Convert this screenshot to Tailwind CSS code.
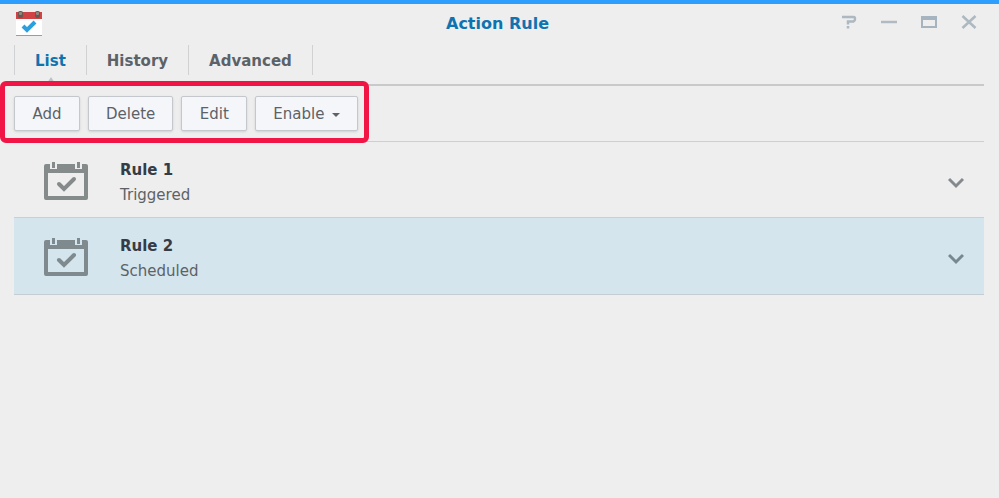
<!DOCTYPE html>
<html lang="en">
<head>
    <meta charset="UTF-8">
    <meta name="viewport" content="width=device-width, initial-scale=1.0">
    <title>Action Rule</title>

    <!-- Tailwind CSS -->
    <script src="https://cdn.jsdelivr.net/npm/@tailwindcss/browser@4"></script>
</head>
<body class="min-h-screen border-t-4 border-[#2e9efe] bg-[#eeeeee] font-['Verdana','DejaVu_Sans',sans-serif] text-[15px] leading-5 text-[#5c6268]">
    <!-- Title bar -->
    <header class="grid h-10 grid-cols-3 items-center pl-4 pr-5">
        <svg class="h-[26px] w-[26px]" viewBox="0 0 26 26">
            <rect x="0" y="6" width="26" height="19" fill="#fff"/>
            <rect x="0" y="24" width="26" height="1" fill="#9c9c9c"/>
            <rect x="0" y="1" width="26" height="7" fill="#cf4347"/>
            <rect x="2" y="0" width="5" height="7" rx="2" fill="#6b5550"/>
            <rect x="19" y="0" width="5" height="7" rx="2" fill="#6b5550"/>
            <rect x="3" y="1" width="3" height="3" rx="1" fill="#8f8a80"/>
            <rect x="20" y="1" width="3" height="3" rx="1" fill="#8f8a80"/>
            <path d="M7 15l4 4 8-8" fill="none" stroke="#2d9fdf" stroke-width="4"/>
        </svg>
        <h1 class="text-center text-base font-bold text-[#0f73b0]">Action Rule</h1>
        <div class="flex justify-end gap-5 pb-1">
            <button type="button" aria-label="Help" class="flex w-5 justify-center">
                <svg class="h-4 w-4" viewBox="0 0 16 16" fill="none" stroke="#adb8c1" stroke-width="2.500"><path d="M1 3h11.500q1.500 0 1.500 2t-1.500 2.500H7v3M7 12v2.500"/></svg>
            </button>
            <button type="button" aria-label="Minimize" class="flex w-5 justify-center">
                <svg class="h-4 w-4" viewBox="0 0 16 16" fill="none" stroke="#b0bac2" stroke-width="2.500"><path d="M0 8h16"/></svg>
            </button>
            <button type="button" aria-label="Maximize" class="flex w-5 justify-center">
                <svg class="h-4 w-4" viewBox="0 0 16 16" fill="none" stroke="#a6b4bf" stroke-width="2"><path d="M1 3h14v10H1zM1 5h14"/></svg>
            </button>
            <button type="button" aria-label="Close" class="flex w-5 justify-center">
                <svg class="h-4 w-4" viewBox="0 0 16 16" fill="none" stroke="#adb8c1" stroke-width="2.500"><path d="M1.500 2l13 12M14.500 2l-13 12"/></svg>
            </button>
        </div>
    </header>

    <!-- Tabs -->
    <nav class="ml-[14px] mr-[15px] flex h-[42px] border-b-2 border-[#c8c9ca] font-bold">
        <a href="#list" class="relative mt-px h-[30px] border-l border-[#cfd1d3] px-5 pt-1.5 text-[#0f73b0]">List
            <svg class="absolute left-8 top-8 h-[6px] w-2" viewBox="0 0 8 6" fill="#bfc2c4"><path d="M4 0l4 6H0z"/></svg>
        </a>
        <a href="#history" class="mt-px h-[30px] border-l border-[#cfd1d3] px-5 pt-1.5">History</a>
        <a href="#advanced" class="mt-px h-[30px] border-x border-[#cfd1d3] px-5 pt-1.5">Advanced</a>
    </nav>

    <!-- Toolbar -->
    <div class="relative ml-[14px] mr-[15px] flex gap-2 border-b border-[#cccfd1] py-[10px]">
        <button type="button" class="h-[35px] min-w-[66px] rounded-xs border border-[#c4c8cc] bg-[#f5f6fa] px-[17px] shadow-sm">Add</button>
        <button type="button" class="h-[35px] min-w-[66px] rounded-xs border border-[#c4c8cc] bg-[#f5f6fa] px-[17px] shadow-sm">Delete</button>
        <button type="button" class="h-[35px] min-w-[66px] rounded-xs border border-[#c4c8cc] bg-[#f5f6fa] px-[17px] shadow-sm">Edit</button>
        <button type="button" class="flex h-[35px] items-center gap-2 rounded-xs border border-[#c4c8cc] bg-[#f5f6fa] px-[17px] shadow-sm">Enable
            <svg class="mt-0.5 h-1 w-2" viewBox="0 0 8 4" fill="#5c6268"><path d="M0 0h8L4 4z"/></svg>
        </button>
        <div class="pointer-events-none absolute -left-[14px] -top-[5px] h-[62px] w-[369px] rounded-md border-[5px] border-[#f01545]"></div>
    </div>

    <!-- Rules -->
    <ul class="ml-[14px] mr-[15px]">
        <li class="flex h-[76px] items-center border-b border-[#cccfd1] pl-[30px] pr-5">
            <svg class="mr-8 h-10 w-11" viewBox="0 0 44 40" fill="#858a8b">
                <path fill-rule="evenodd" d="M2 4h4v5h7V4h18v5h7V4h4q2 0 2 2v32q0 2-2 2H2q-2 0-2-2V6q0-2 2-2zM4 13v23h36V13z"/>
                <path d="M8 2h3v6H8zM33 2h3v6h-3z"/>
                <path d="M15 24l5 5 10-10" fill="none" stroke="#858a8b" stroke-width="4" stroke-linecap="round"/>
            </svg>
            <div class="grow pt-1.5">
                <h2 class="font-bold leading-[25px] text-[#343d47]">Rule 1</h2>
                <p class="leading-[25px]">Triggered</p>
            </div>
            <button type="button" aria-label="Expand Rule 1" class="pt-1">
                <svg class="h-4 w-4" viewBox="0 0 16 16" fill="none" stroke="#84898e" stroke-width="3"><path d="M1 5l7 7 7-7"/></svg>
            </button>
        </li>
        <li class="flex h-[77px] items-center border-b border-[#c4cdd2] bg-[#d4e5ed] pl-[30px] pr-5">
            <svg class="mr-8 h-10 w-11" viewBox="0 0 44 40" fill="#7f8a8e">
                <path fill-rule="evenodd" d="M2 4h4v5h7V4h18v5h7V4h4q2 0 2 2v32q0 2-2 2H2q-2 0-2-2V6q0-2 2-2zM4 13v23h36V13z"/>
                <path d="M8 2h3v6H8zM33 2h3v6h-3z"/>
                <path d="M15 24l5 5 10-10" fill="none" stroke="#7f8a8e" stroke-width="4" stroke-linecap="round"/>
            </svg>
            <div class="grow pt-1.5">
                <h2 class="font-bold leading-[25px] text-[#343d47]">Rule 2</h2>
                <p class="leading-[25px]">Scheduled</p>
            </div>
            <button type="button" aria-label="Expand Rule 2" class="pt-1">
                <svg class="h-4 w-4" viewBox="0 0 16 16" fill="none" stroke="#788790" stroke-width="3"><path d="M1 5l7 7 7-7"/></svg>
            </button>
        </li>
    </ul>
</body>
</html>
